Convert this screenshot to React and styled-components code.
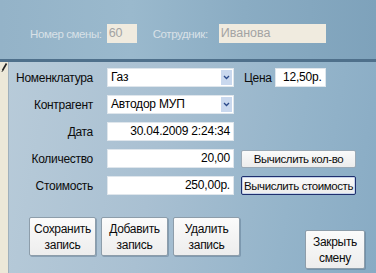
import React from "react";
import styled, { createGlobalStyle } from "styled-components";

const Global = createGlobalStyle`
  html, body {
    margin: 0;
    padding: 0;
    background: #8fb0c6;
  }
  body {
    font-family: "Liberation Sans", Arial, sans-serif;
  }
`;

const Window = styled.div`
  width: 376px;
  height: 273px;
  display: flex;
  flex-direction: column;
  overflow: hidden;
`;

const Header = styled.div`
  height: 59px;
  display: flex;
  align-items: center;
  padding-left: 30px;
  padding-top: 8px;
  box-sizing: border-box;
  background: linear-gradient(90deg, #94b3c8 0%, #9ab9cd 35%, #8aacc3 65%, #7ea2bb 100%);
`;

const HeaderLabel = styled.span`
  font-size: 11.5px;
  color: #d9e1e7;
  letter-spacing: -0.4px;
  margin-right: ${(p) => p.$gap}px;
`;

const HeaderField = styled.div`
  width: ${(p) => p.$w}px;
  height: 19px;
  background: #f0ebdf;
  color: #a3a3a3;
  font-size: 12.5px;
  line-height: 19px;
  padding-left: 2px;
  box-sizing: border-box;
  margin-right: ${(p) => p.$after || 0}px;
`;

const Divider = styled.div`
  height: 3px;
  background: #4f708b;
`;

const Body = styled.div`
  flex: 1;
  display: flex;
`;

const Strip = styled.div`
  width: 8px;
  background: #ece8d8;
  border-right: 1px solid #9fb0bc;
  position: relative;
`;

const Pencil = styled.svg`
  position: absolute;
  left: 1px;
  top: 1px;
`;

const Main = styled.div`
  flex: 1;
  padding-top: 6px;
  display: flex;
  flex-direction: column;
  background: linear-gradient(100deg, #b8cbd9 0%, #a9c0d2 40%, #94b4ca 75%, #88abc4 100%);
`;

const Form = styled.div`
  display: flex;
  flex-direction: column;
  gap: 8px;
`;

const Row = styled.div`
  display: flex;
  align-items: center;
  height: 19px;
`;

const Label = styled.span`
  width: 84px;
  text-align: right;
  margin-right: 14px;
  font-size: 12px;
  color: #0c0c0c;
  letter-spacing: -0.3px;
  white-space: nowrap;
`;

const Field = styled.div`
  position: relative;
  width: ${(p) => p.$w || 127}px;
  height: 19px;
  background: #fff;
  border: 1px solid #dfe6ec;
  box-sizing: border-box;
  font-size: 12px;
  line-height: 17px;
  color: #000;
  padding: 0 3px;
  text-align: ${(p) => (p.$right ? "right" : "left")};
  letter-spacing: -0.2px;
  white-space: nowrap;
`;

const Arrow = styled.div`
  position: absolute;
  right: 1px;
  top: 1px;
  width: 11px;
  height: 15px;
  background: #c9d8ee;
  display: flex;
  align-items: center;
  justify-content: center;
`;

const Price = styled.span`
  font-size: 12px;
  color: #0c0c0c;
  margin-left: 10px;
  margin-right: 3px;
  letter-spacing: -0.3px;
`;

const CalcButton = styled.button`
  margin-left: 7px;
  width: 115px;
  height: ${(p) => (p.$focus ? 19 : 18)}px;
  padding: 0;
  font-family: "Liberation Sans", Arial, sans-serif;
  font-size: 11.5px;
  letter-spacing: -0.4px;
  white-space: nowrap;
  color: #0c0c0c;
  background: linear-gradient(#fafafa, #ececec);
  border: 1px solid ${(p) => (p.$focus ? "#1f2f6e" : "#9aa9b6")};
  box-shadow: ${(p) => (p.$focus ? "inset 0 0 0 1px #c6d3ea" : "none")};
  border-radius: 2px;
`;

const Actions = styled.div`
  display: flex;
  align-items: flex-start;
  margin-top: 22px;
  padding-left: 20px;
  padding-right: 11px;
  gap: 5px;
`;

const BigButton = styled.button`
  width: ${(p) => p.$w || 67}px;
  height: 39px;
  margin-top: ${(p) => p.$down || 0}px;
  margin-left: ${(p) => (p.$push ? "auto" : "0")};
  padding: 0;
  font-family: "Liberation Sans", Arial, sans-serif;
  font-size: 12px;
  line-height: 16px;
  letter-spacing: -0.3px;
  color: #0c0c0c;
  background: linear-gradient(#fbfbfb, #ededed);
  border: 1px solid #8d9daa;
  border-radius: 2px;
  box-shadow: 1px 1px 0 rgba(70, 95, 120, 0.35);
`;

const Chevron = () => (
  <svg width="7" height="5" viewBox="0 0 7 5">
    <path d="M1 1 L3.5 3.5 L6 1" stroke="#2b4a8a" strokeWidth="1.3" fill="none" />
  </svg>
);

export default function App() {
  return (
    <Window>
      <Global />
      <Header>
        <HeaderLabel $gap={5}>Номер смены:</HeaderLabel>
        <HeaderField $w={30} $after={16}>60</HeaderField>
        <HeaderLabel $gap={11}>Сотрудник:</HeaderLabel>
        <HeaderField $w={107}>Иванова</HeaderField>
      </Header>
      <Divider />
      <Body>
        <Strip>
          <Pencil width="7" height="9" viewBox="0 0 7 9">
            <path d="M5.5 0.5 L1.5 7.5" stroke="#222" strokeWidth="1.6" />
            <path d="M1.5 7.5 L1 8.8" stroke="#222" strokeWidth="1" />
          </Pencil>
        </Strip>
        <Main>
          <Form>
            <Row>
              <Label>Номенклатура</Label>
              <Field>
                Газ
                <Arrow>
                  <Chevron />
                </Arrow>
              </Field>
              <Price>Цена</Price>
              <Field $w={51} $right>
                12,50р.
              </Field>
            </Row>
            <Row>
              <Label>Контрагент</Label>
              <Field>
                Автодор МУП
                <Arrow>
                  <Chevron />
                </Arrow>
              </Field>
            </Row>
            <Row>
              <Label>Дата</Label>
              <Field $right>30.04.2009 2:24:34</Field>
            </Row>
            <Row>
              <Label>Количество</Label>
              <Field $right>20,00</Field>
              <CalcButton>Вычислить кол-во</CalcButton>
            </Row>
            <Row>
              <Label>Стоимость</Label>
              <Field $right>250,00р.</Field>
              <CalcButton $focus>Вычислить стоимость</CalcButton>
            </Row>
          </Form>
          <Actions>
            <BigButton>
              Сохранить
              <br />
              запись
            </BigButton>
            <BigButton>
              Добавить
              <br />
              запись
            </BigButton>
            <BigButton>
              Удалить
              <br />
              запись
            </BigButton>
            <BigButton $push $w={60} $down={13}>
              Закрыть
              <br />
              смену
            </BigButton>
          </Actions>
        </Main>
      </Body>
    </Window>
  );
}
